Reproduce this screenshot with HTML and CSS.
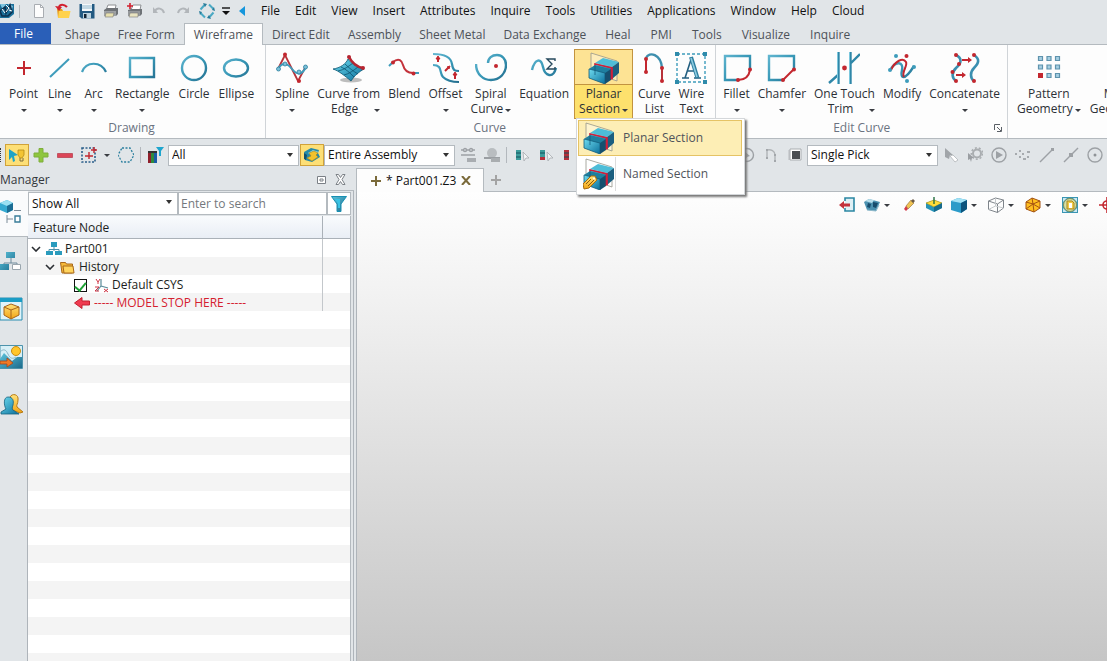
FILE: index.html
```html
<!DOCTYPE html>
<html lang="en">
<head>
<meta charset="utf-8">
<title>Part001.Z3</title>
<link rel="stylesheet" href="styles.css">
</head>
<body>
<svg class="sprite" aria-hidden="true">
  <defs>
    <linearGradient id="teal" x1="0" y1="0" x2="1" y2="1"><stop offset="0" stop-color="#5cc4dc"/><stop offset="1" stop-color="#1d6b8c"/></linearGradient>
    <linearGradient id="cube" x1="0" y1="0" x2="1" y2="1"><stop offset="0" stop-color="#6fdcf0"/><stop offset="1" stop-color="#0a6f9b"/></linearGradient>
    <linearGradient id="gold" x1="0" y1="0" x2="0" y2="1"><stop offset="0" stop-color="#ffe27a"/><stop offset="1" stop-color="#f2a413"/></linearGradient>
    <linearGradient id="stroke" gradientUnits="userSpaceOnUse" x1="0" y1="0" x2="32" y2="32"><stop offset="0" stop-color="#6bbdd6"/><stop offset="0.5" stop-color="#3797b6"/><stop offset="1" stop-color="#1f6485"/></linearGradient>
    <symbol id="section" viewBox="0 0 32 32">
      <path d="M3 1l26 8v20L3 20z" fill="#fff" fill-opacity=".35" stroke="#96958a" stroke-width=".8"/>
      <path d="M7 11l8-5 16 4-7 5z" fill="#4dbdd8"/>
      <path d="M7 11l17 4v10L7 21z" fill="url(#cube)"/>
      <path d="M24 15l7-5v11l-7 6z" fill="#1b5f80"/>
      <path d="M7 17v-5l17 4v11" fill="none" stroke="#d01f3a" stroke-width="1.600"/>
      <path d="M1 17l6-4 16 4-6 5z" fill="#1e7f9f"/>
      <path d="M1 17l16 4v11L1 26z" fill="url(#cube)" stroke="#125c7b" stroke-width=".8"/>
      <path d="M17 21l6-4v11l-6 4z" fill="#15506f"/>
      <path d="M23.500 16v11.500" stroke="#d01f3a" stroke-width="1.600"/>
      <path d="M7 14v9" stroke="#125c7b" stroke-width=".8"/>
    </symbol>
  </defs>
</svg>

<div class="app">
<header class="menubar">
  <div class="quick">
    <svg class="logo" width="14" height="20" viewBox="0 0 14 20"><path d="M0 3h14v10l-5 4H0z" fill="#1b6f9a"/><path d="M0 3h6l-3 6zM8 3l5 2-2 6z" fill="#7ec3df"/><path d="M0 10l5-4 1 6 4-8 2 7-4 4H2z" fill="none" stroke="#0d2f4d" stroke-width="1.600"/><path d="M6 4l3 3-3 4M2 8l3 4M9 9l3 1" stroke="#fff" fill="none"/></svg>
    <span class="rule"></span>
    <button class="tool" aria-label="New"><svg width="16" height="16" viewBox="0 0 16 16"><path d="M3.500 1.500h6l3 3v10h-9z" fill="#fdfdfd" stroke="#a9adb2"/><path d="M9.500 1.500v3h3" fill="none" stroke="#a9adb2"/></svg></button>
    <button class="tool" aria-label="Open"><svg width="16" height="16" viewBox="0 0 16 16"><path d="M2 6h5l1 2h6v7H3z" fill="#e9a01e"/><path d="M4 8h11.500l-1.500 7H3z" fill="#ffd24d"/><path d="M12 4C9 1 5 1 4 4" fill="none" stroke="#d2202f" stroke-width="2.200"/><path d="M0 3l4 5 3-4z" fill="#d2202f"/></svg></button>
    <button class="tool" aria-label="Save"><svg width="16" height="16" viewBox="0 0 16 16"><path d="M.500 1h15v14.500h-13l-2-2z" fill="#235a82"/><path d="M3 1h10v7H3z" fill="#f5f8fa"/><path d="M3 3h10M3 5h10" stroke="#8fb7cc"/><path d="M4 10h8v5.500H4z" fill="#bcd3e0"/><path d="M5 11h2.500v4H5z" fill="#123"/></svg></button>
    <button class="tool" aria-label="Print"><svg width="16" height="16" viewBox="0 0 16 16"><path d="M5 2h8l-1 5H3z" fill="#fff" stroke="#8e9093"/><path d="M1 7l3-2h11v6l-2 2H1z" fill="#6f7377"/><path d="M1 8h12v5H1z" fill="#9ea1a4"/><path d="M3 10h8l-1 4H2z" fill="#e6dfae" stroke="#777" stroke-width=".6"/></svg></button>
    <button class="tool" aria-label="Quick print"><svg width="16" height="16" viewBox="0 0 16 16"><path d="M6 2h8l-1 5H4z" fill="#fff" stroke="#8e9093"/><path d="M1 7l3-1h11v5l-2 2H1z" fill="#6f7377"/><path d="M1 8h12v5H1z" fill="#94979a"/><path d="M3 10h8v4H2z" fill="#e8e3c0" stroke="#777" stroke-width=".6"/><path d="M3 0v6M0 3h6" stroke="#d2202f" stroke-width="1.600"/></svg></button>
    <button class="tool" aria-label="Undo"><svg width="16" height="16" viewBox="0 0 16 16"><path d="M4 8c2-4 8-3 9 2" fill="none" stroke="#b2b6ba" stroke-width="2"/><path d="M2 4v6h5z" fill="#b2b6ba"/></svg></button>
    <button class="tool" aria-label="Redo"><svg width="16" height="16" viewBox="0 0 16 16"><path d="M12 8c-2-4-8-3-9 2" fill="none" stroke="#b2b6ba" stroke-width="2"/><path d="M14 4v6H9z" fill="#b2b6ba"/></svg></button>
    <button class="tool" aria-label="Regenerate"><svg width="16" height="16" viewBox="0 0 16 16"><path d="M1.500 6.500l4-4.500M10 1.500l4.500 4.500M14.500 9.500l-4 4.500M6 14.500L1.500 10" stroke="#4ba9c4" stroke-width="2" fill="none"/><path d="M4 0l4 1-2 3zM15 4l1 4-3-1zM12 16l-4-1 2-3zM1 12L0 8l3 1z" fill="#287b99"/></svg></button>
    <button class="more" aria-label="Customize"><svg width="8" height="8" viewBox="0 0 8 8"><path d="M0 1h8" stroke="#111" stroke-width="1.400"/><path d="M0 4h8L4 8z" fill="#111"/></svg></button>
    <button class="back" aria-label="Collapse"><svg width="6" height="10" viewBox="0 0 6 10"><path d="M6 0v10L0 5z" fill="#1596dc"/></svg></button>
  </div>
  <nav class="menus">
    <a href="#">File</a><a href="#">Edit</a><a href="#">View</a><a href="#">Insert</a><a href="#">Attributes</a><a href="#">Inquire</a><a href="#">Tools</a><a href="#">Utilities</a><a href="#">Applications</a><a href="#">Window</a><a href="#">Help</a><a href="#">Cloud</a>
  </nav>
</header>

<nav class="tabs">
  <a href="#" class="file">File</a><a href="#">Shape</a><a href="#">Free Form</a><a href="#" class="active">Wireframe</a><a href="#">Direct Edit</a><a href="#">Assembly</a><a href="#">Sheet Metal</a><a href="#">Data Exchange</a><a href="#" class="wide">Heal</a><a href="#" class="wide">PMI</a><a href="#" class="wide">Tools</a><a href="#" class="wide">Visualize</a><a href="#" class="wide">Inquire</a>
</nav>

<section class="ribbon">
  <div class="group spaced">
    <div class="commands">
      <button class="cmd"><span class="pic"><svg width="32" height="32" viewBox="0 0 32 32"><path d="M16 9v14M9 16h14" stroke="#c3272f" stroke-width="2"/></svg></span><span>Point</span><i class="caret"></i></button>
      <button class="cmd"><span class="pic"><svg width="32" height="32" viewBox="0 0 32 32"><path d="M6 25L25 7" stroke="#3e9cbb" stroke-width="2"/></svg></span><span>Line</span><i class="caret"></i></button>
      <button class="cmd"><span class="pic"><svg width="32" height="32" viewBox="0 0 32 32"><path d="M4 20C8 9 23 9 28 20" fill="none" stroke="url(#stroke)" stroke-width="2.200"/></svg></span><span>Arc</span><i class="caret"></i></button>
      <button class="cmd"><span class="pic"><svg width="32" height="32" viewBox="0 0 32 32"><path d="M4 6h24v19H4z" fill="none" stroke="url(#stroke)" stroke-width="2.400"/></svg></span><span>Rectangle</span><i class="caret"></i></button>
      <button class="cmd"><span class="pic"><svg width="32" height="32" viewBox="0 0 32 32"><circle cx="16" cy="16" r="12" fill="none" stroke="url(#stroke)" stroke-width="2.400"/></svg></span><span>Circle</span></button>
      <button class="cmd"><span class="pic"><svg width="32" height="32" viewBox="0 0 32 32"><ellipse cx="16" cy="16" rx="12" ry="8.500" fill="none" stroke="url(#stroke)" stroke-width="2.400"/></svg></span><span>Ellipse</span></button>
    </div>
    <h2>Drawing</h2>
  </div>
  <div class="group">
    <div class="commands">
      <button class="cmd"><span class="pic"><svg width="32" height="32" viewBox="0 0 32 32"><path d="M2 17L9 3l13 26 8-15" fill="none" stroke="#b8323a" stroke-width="1.800"/><path d="M2 17C7 9 12 12 16 17s9 8 14-2" fill="none" stroke="#3e9cbb" stroke-width="2"/><g fill="#c3272f"><circle cx="9" cy="2.500" r="2"/><circle cx="23" cy="29" r="2"/></g><g fill="#7cc0d8" stroke="#2a7f9e" stroke-width=".8"><circle cx="2.500" cy="17" r="2"/><circle cx="9" cy="12" r="2"/><circle cx="23" cy="20" r="2"/><circle cx="29.500" cy="15" r="2"/></g></svg></span><span>Spline</span><i class="caret"></i></button>
      <button class="cmd"><span class="pic"><svg width="32" height="32" viewBox="0 0 32 32"><ellipse cx="18" cy="28" rx="11" ry="2.500" fill="#000" opacity=".25"/><path d="M0 17C7 16 13 12 15 7c4 5 10 10 16 10-5 3-9 6-13 12C12 24 6 19 0 17z" fill="url(#cube)" stroke="#0d5873" stroke-width=".8"/><path d="M5 19c6-1 11-5 15-8M11 23c5-1 10-5 14-8M8 15c5 2 9 6 13 10M12 12c4 4 8 7 13 10" fill="none" stroke="#0c5470" stroke-width=".8"/><path d="M16 5c3 6 9 10 14 11" fill="none" stroke="#b62531" stroke-width="2.600"/><circle cx="16" cy="5" r="2" fill="#b62531"/><circle cx="30" cy="16" r="2" fill="#b62531"/></svg></span><span>Curve from</span><span class="last"><span>Edge</span><i class="caret"></i></span></button>
      <button class="cmd"><span class="pic"><svg width="32" height="32" viewBox="0 0 32 32"><path d="M1 14l4-4M25 21h6" stroke="#3e9cbb" stroke-width="2"/><path d="M5 10C11 5 14 9 15 13s3 8 10 8" fill="none" stroke="#c3323b" stroke-width="2"/><circle cx="5" cy="10.500" r="2" fill="#c3272f"/><circle cx="25.500" cy="21.500" r="2" fill="#c3272f"/></svg></span><span>Blend</span></button>
      <button class="cmd"><span class="pic"><svg width="32" height="32" viewBox="0 0 32 32"><g fill="none" stroke="url(#stroke)" stroke-width="2.200"><path d="M3 2c11 0 18 3 19 10s3 7 7 7"/><path d="M3 13c10 0 6 8 10 12 3 3 8 5 16 5"/></g><g fill="#c3272f" stroke="#c3272f"><path d="M8 10V6M25 27v-5M15 19l4-4" stroke-width="2"/><path d="M8 4l2 3H6zM25 20l2 3h-4zM20 14l-1 3-2-2z"/></g></svg></span><span>Offset</span><i class="caret"></i></button>
      <button class="cmd"><span class="pic"><svg width="32" height="32" viewBox="0 0 32 32"><path d="M1 12c0 10 7 16 15 16 9 0 15-7 15-15 0-6-4-10-9-10s-9 3-9 8" fill="none" stroke="url(#stroke)" stroke-width="2.400"/><circle cx="21" cy="14" r="2" fill="#c3272f"/></svg></span><span>Spiral</span><span class="last"><span>Curve</span><i class="caret"></i></span></button>
      <button class="cmd"><span class="pic"><svg width="32" height="32" viewBox="0 0 32 32"><path d="M4 18c3-12 9-12 11-3s10 12 13 1" fill="none" stroke="url(#stroke)" stroke-width="2.400"/><path d="M27 9V7h-8l5 5-5 5h8v-2" fill="none" stroke="#26485c" stroke-width="1.400"/></svg></span><span>Equation</span></button>
      <div class="dropdown">
        <button class="cmd chosen"><span class="pic"><svg width="32" height="32"><use href="#section"/></svg></span><span>Planar</span><span class="last"><span>Section</span><i class="caret"></i></span></button>
        <div class="popup">
          <button class="option current"><svg width="32" height="32"><use href="#section"/></svg><span>Planar Section</span></button>
          <button class="option"><svg width="32" height="32" viewBox="0 0 32 32"><use href="#section" width="32" height="32"/><path d="M0 26l8-8 4 0 2 4-8 8-5 1z" fill="url(#gold)" stroke="#a56a10"/><path d="M3 26l5-5M5 28l6-6" stroke="#8d5a0c"/><circle cx="11" cy="20.500" r="1" fill="#fff"/></svg><span>Named Section</span></button>
        </div>
      </div>
      <button class="cmd"><span class="pic"><svg width="32" height="32" viewBox="0 0 32 32"><path d="M8 7v14" stroke="#c3272f" stroke-width="2"/><path d="M24 16v13" stroke="#b8323a" stroke-width="2"/><path d="M8 6c3-7 15-4 16 10" fill="none" stroke="#3e8fae" stroke-width="2.400"/><g fill="#c3272f"><circle cx="8" cy="7" r="2"/><circle cx="8" cy="20" r="2"/><circle cx="24" cy="16" r="2"/><circle cx="24" cy="29" r="2"/></g></svg></span><span>Curve</span><span>List</span></button>
      <button class="cmd"><span class="pic"><svg width="32" height="32" viewBox="0 0 32 32"><path d="M2 2h28v28H2z" fill="none" stroke="#3e9cbb" stroke-width="1.400" stroke-dasharray="3 2"/><path d="M0 0h4v4H0zM28 0h4v4h-4zM0 28h4v4H0zM28 28h4v4h-4z" fill="#2f8bab"/><path d="M7 26h7M19 26h7M10 26l6.500-20M12 19h8" fill="none" stroke="#235f80" stroke-width="1.600"/><path d="M16 5l6.500 21" stroke="#2c7d9e" stroke-width="4"/><path d="M16 6l6 19" stroke="#8ecbe0" stroke-width="1.600"/></svg></span><span>Wire</span><span>Text</span></button>
    </div>
    <h2>Curve</h2>
  </div>
  <div class="group tight">
    <div class="commands">
      <button class="cmd"><span class="pic"><svg width="32" height="32" viewBox="0 0 32 32"><path d="M18 28H4V4h25v14" fill="none" stroke="url(#stroke)" stroke-width="2.400"/><path d="M17 28c7 0 11-4 12-10" fill="none" stroke="#c3272f" stroke-width="2"/><circle cx="17" cy="28" r="2" fill="#c3272f"/><circle cx="29" cy="17.500" r="2" fill="#c3272f"/></svg></span><span>Fillet</span><i class="caret"></i></button>
      <button class="cmd"><span class="pic"><svg width="32" height="32" viewBox="0 0 32 32"><path d="M17 28H3V4h25v13" fill="none" stroke="url(#stroke)" stroke-width="2.400"/><path d="M17 28l11-11" stroke="#c3272f" stroke-width="2"/><circle cx="17" cy="28" r="2" fill="#c3272f"/><circle cx="28" cy="17.500" r="2" fill="#c3272f"/></svg></span><span>Chamfer</span><i class="caret"></i></button>
      <button class="cmd"><span class="pic"><svg width="32" height="32" viewBox="0 0 32 32"><g stroke="#2f87a8" stroke-width="2.400"><path d="M10.500 0v32M22.500 0v32M1 31l9-8M23 11l9-9"/></g><path d="M9.500 0v32M21.500 0v32" stroke="#7cc7dd" stroke-width="1"/><circle cx="16.500" cy="16" r="2.400" fill="#c3272f"/></svg></span><span>One Touch</span><span class="last"><span>Trim</span><i class="caret"></i></span></button>
      <button class="cmd"><span class="pic"><svg width="32" height="32" viewBox="0 0 32 32"><path d="M4 18c6-10 14-8 12 0s2 12 12-4" fill="none" stroke="url(#stroke)" stroke-width="2.400"/><path d="M5 18c4-9 12-13 15-8 2 4-5 10-2 15" fill="none" stroke="#c3272f" stroke-width="2"/><circle cx="20.500" cy="4" r="2" fill="#c3272f"/><g fill="#3e9cbb"><circle cx="10" cy="4" r="2"/><circle cx="4" cy="18" r="2"/><circle cx="28" cy="15" r="2"/><circle cx="21" cy="29" r="2"/></g></svg></span><span>Modify</span></button>
      <button class="cmd"><span class="pic"><svg width="32" height="32" viewBox="0 0 32 32"><g fill="none" stroke="#3a8fb0" stroke-width="2.600"><path d="M7 3c6 3 6 8 0 13-5 5-4 10 0 13"/><path d="M25 3c6 4 5 8 0 13-4 4-4 10 0 13"/></g><path d="M13 8h8M7 23h8" stroke="#c3272f" stroke-width="1.800"/><path d="M19 5l4 3-4 3zM13 20l4 3-4 3z" fill="#c3272f"/><g fill="#c3272f"><circle cx="7" cy="3" r="2"/><circle cx="10" cy="12" r="2"/><circle cx="3.500" cy="20" r="2"/><circle cx="7" cy="29" r="2"/><circle cx="25" cy="3" r="2"/><circle cx="25" cy="29" r="2"/></g></svg></span><span>Concatenate</span><i class="caret"></i></button>
    </div>
    <h2>Edit Curve</h2>
    <button class="launcher" aria-label="Edit Curve options"><svg width="8" height="8" viewBox="0 0 8 8"><path d="M.500 6V.500H6M3 3l4 4M7.500 3v4.500H3" fill="none" stroke="#5b6067"/></svg></button>
  </div>
  <div class="group spaced">
    <div class="commands">
      <button class="cmd"><span class="pic"><svg width="32" height="32" viewBox="0 0 32 32"><g fill="#a5cfe2" stroke="#5f93ad" stroke-width="1.200"><path d="M5.500 4.500h4v4h-4zM14 4.500h4v4h-4zM22.500 4.500h4v4h-4zM5.500 13h4v4h-4zM14 13h4v4h-4zM22.500 13h4v4h-4zM14 21.500h4v4h-4zM22.500 21.500h4v4h-4z"/></g><path d="M5 21h5v5H5z" fill="#c3272f"/></svg></span><span>Pattern</span><span class="last"><span>Geometry</span><i class="caret"></i></span></button>
      <button class="cmd"><span class="pic"></span><span>Mirror</span><span class="last"><span>Geometry</span><i class="caret"></i></span></button>
    </div>
  </div>
</section>

<div class="toolbar">
  <span class="grip"></span>
  <button class="tool on" aria-label="Pick filter"><svg width="16" height="16" viewBox="0 0 16 16"><path d="M0 2l9 6-4 1 1 5-2 1-1-5-3 3z" fill="#1fa3c7"/><path d="M9 3h6v5l-2 3h-2L9 8z" fill="#f3c432" stroke="#b48b16" stroke-width=".8"/><path d="M11 11v3h3v-3" fill="none" stroke="#7b6b3a"/></svg></button>
  <button class="tool" aria-label="Add"><svg width="16" height="16" viewBox="0 0 16 16"><path d="M6 1.500h4V6h5v4h-5v5H6v-5H1V6h5z" fill="#8ec63f" stroke="#7fae3c"/></svg></button>
  <button class="tool" aria-label="Remove"><svg width="16" height="16" viewBox="0 0 16 16"><path d="M.500 6.500h15v4H.500z" fill="#dc4658" stroke="#c05562"/></svg></button>
  <button class="tool" aria-label="Pick mode"><svg width="16" height="16" viewBox="0 0 16 16"><path d="M1 1h13v14H1z" fill="none" stroke="#2b5f8a" stroke-width="1.600" stroke-dasharray="2 1.500"/><path d="M8 5v7M4 9h8M13 0v6M10 3h6" stroke="#c3272f" stroke-width="1.400"/></svg></button>
  <button class="arrow" aria-label="Pick mode menu"><i class="caret"></i></button>
  <button class="tool" aria-label="Polygon pick"><svg width="16" height="16" viewBox="0 0 16 16"><path d="M4 1h8l4 7-4 7H4L0 8z" fill="none" stroke="#2b7f9e" stroke-width="1.300" stroke-dasharray="2 1.500"/></svg></button>
  <span class="rule"></span>
  <button class="tool" aria-label="Filter color"><svg width="16" height="16" viewBox="0 0 16 16"><path d="M0 5h3v11H0z" fill="#8f1f2b"/><path d="M3 5h3v11H3z" fill="#2e8b3d"/><path d="M6 5h3v11H6z" fill="#1a5ba5"/><path d="M0 4h9v2H0z" fill="#333"/><path d="M8 0h8l-3 4v5h-2V4z" fill="#1ea5ce"/></svg></button>
  <label class="combo"><select aria-label="Filter list"><option>All</option></select></label>
  <button class="tool on" aria-label="Assembly scope"><svg width="18" height="18" viewBox="0 0 18 18"><path d="M1 6l7-4 8 2-1 3 2 4-8 5-7-2z" fill="#258aa8"/><path d="M5 7l5-3 6 2-6 4z" fill="#8fdcec"/><path d="M6 7l5-2 4 2-2 2 2 2-6 4-5-3 4-2z" fill="#f3c22c" stroke="#a98418" stroke-width=".6"/><path d="M1 7l3 2-1 5-2-1z" fill="#11516f"/></svg></button>
  <label class="combo"><select aria-label="Scope"><option>Entire Assembly</option></select></label>
  <button class="tool" aria-label="Link"><svg width="16" height="16" viewBox="0 0 16 16"><g stroke="#9da1a5" fill="none" stroke-width="1.400"><path d="M1 8h14M1 3h3M12 3h3M7 3h2"/><circle cx="5" cy="3" r="1.500"/><circle cx="11" cy="3" r="1.500"/></g><path d="M7 11h9v4H7z" fill="#a9adb1"/></svg></button>
  <button class="tool" aria-label="Globe"><svg width="16" height="16" viewBox="0 0 16 16"><circle cx="8" cy="6" r="5" fill="#b9bdc0"/><path d="M0 11h16" stroke="#9a9ea2" stroke-width="2"/><path d="M7 11h9v4H7z" fill="#a9adb0"/></svg></button>
  <span class="rule"></span>
  <button class="tool" aria-label="Pick all"><svg width="16" height="16" viewBox="0 0 16 16"><path d="M2 3h5v10H2z" fill="#3c9c9b"/><path d="M2 6h5M2 10h5" stroke="#14515d"/><path d="M9 5l6 6-3 0-2 3z" fill="#f2f4f5" stroke="#a6abaf" stroke-width=".8"/></svg></button>
  <button class="tool" aria-label="Pick last"><svg width="16" height="16" viewBox="0 0 16 16"><path d="M2 3h5v7H2z" fill="#3c9c9b"/><path d="M2 10h5v3H2z" fill="#b5303b"/><path d="M2 6h5" stroke="#14515d"/><path d="M9 5l6 6-3 0-2 3z" fill="#f2f4f5" stroke="#a6abaf" stroke-width=".8"/></svg></button>
  <button class="tool" aria-label="Unpick all"><svg width="16" height="16" viewBox="0 0 16 16"><path d="M2 3h5v10H2z" fill="#b5303b"/><path d="M2 6h5M2 10h5" stroke="#14515d"/></svg></button>
  <span class="covered"></span>
  <button class="tool" aria-label="Pick point"><svg width="16" height="16" viewBox="0 0 16 16"><circle cx="8" cy="8" r="6.500" fill="none" stroke="#9da1a5" stroke-width="1.400"/><path d="M5 4l6 5-3 1-2 3z" fill="#9da1a5"/></svg></button>
  <button class="tool" aria-label="Pick curve"><svg width="16" height="16" viewBox="0 0 16 16"><path d="M4 12V3c4-1 8 1 8 5v6" fill="none" stroke="#b0b4b7" stroke-width="1.400"/><path d="M3 2h2v2H3zM3 10h2v2H3zM11 7h2v2h-2zM11 13h2v2h-2z" fill="#a3a7ab"/></svg></button>
  <button class="tool" aria-label="Pick face"><svg width="16" height="16" viewBox="0 0 16 16"><path d="M1 3h11v10H1z" fill="#cdd0d3"/><path d="M3 2h11v11H3z" fill="#fff" stroke="#a9adb0"/><path d="M5 4h8v8H5z" fill="#4b4e52"/></svg></button>
  <label class="combo"><select aria-label="Pick type"><option>Single Pick</option></select></label>
  <button class="tool" aria-label="Cursor"><svg width="16" height="16" viewBox="0 0 16 16"><path d="M2 1l8 7-3 0-1 4-4-2z" fill="#a1a5a9"/><path d="M7 9l3-1 5 5-3 2z" fill="#fff" stroke="#b0b4b7" stroke-width=".8"/></svg></button>
  <button class="tool" aria-label="Pick settings"><svg width="16" height="16" viewBox="0 0 16 16"><circle cx="10" cy="6.500" r="4" fill="none" stroke="#a9adb0" stroke-width="2"/><circle cx="10" cy="6.500" r="5.700" fill="none" stroke="#a9adb0" stroke-width="1.500" stroke-dasharray="2 2"/><path d="M1 6l6 5-2 0-1 4-1-3-2 1z" fill="#9a9ea2"/></svg></button>
  <button class="tool" aria-label="Play"><svg width="16" height="16" viewBox="0 0 16 16"><circle cx="8" cy="8" r="7" fill="none" stroke="#9da1a5" stroke-width="1.400"/><path d="M5 4l7 4-7 4z" fill="#9da1a5"/></svg></button>
  <button class="tool" aria-label="Points"><svg width="16" height="16" viewBox="0 0 16 16"><path d="M0 6h2v2H0zM4 3h2v2H4zM7 6h2v2H7zM4 9h2v2H4zM8 11h3v2H8zM12 9h2v2h-2zM12 4h3v2h-3z" fill="#a6aaae"/></svg></button>
  <button class="tool" aria-label="End point"><svg width="16" height="16" viewBox="0 0 16 16"><path d="M1 15L14 2" stroke="#9da1a5" stroke-width="1.400"/><path d="M12 1h3v3h-3z" fill="#9da1a5"/></svg></button>
  <button class="tool" aria-label="Midpoint"><svg width="16" height="16" viewBox="0 0 16 16"><path d="M1 15L15 1" stroke="#9da1a5" stroke-width="1.400"/><path d="M6 6h4v4H6z" fill="#9da1a5"/></svg></button>
  <button class="tool" aria-label="Center"><svg width="16" height="16" viewBox="0 0 16 16"><circle cx="8" cy="8" r="7" fill="none" stroke="#9da1a5" stroke-width="1.400"/><circle cx="8" cy="8" r="1.500" fill="#8f9397"/></svg></button>
</div>

<main class="work">
  <aside class="manager">
    <div class="title"><h1>Manager</h1>
      <button aria-label="Float"><svg width="9" height="8" viewBox="0 0 9 8"><path d="M.500.500h8v7h-8z" fill="#fff" stroke="#7b8086"/><path d="M3 3h3v2H3z" fill="none" stroke="#7b8086"/></svg></button>
      <button aria-label="Close"><svg width="11" height="11" viewBox="0 0 11 11"><path d="M1 .500h2.500l2 3 2-3H10L7 5.500l3 5H7.500l-2-3-2 3H1l3-5z" fill="#fff" stroke="#7b8086"/></svg></button>
    </div>
    <div class="body">
      <div class="pages">
        <button class="open" aria-label="History"><svg width="22" height="26" viewBox="0 0 22 26"><path d="M0 4l7-3 6 3v7l-6 3-7-3z" fill="#35a9d0"/><path d="M0 4l7-3 6 3-6 3z" fill="#9be0f2"/><path d="M7 7l6-3v7l-6 3z" fill="#1c6d94"/><path d="M7 16v8M7 20h6M14 11.500h7" stroke="#7c8c98" fill="none"/><path d="M15 17h5v6h-5z" fill="#fff" stroke="#3a7d99" stroke-width="1.400"/></svg></button>
        <button aria-label="Assembly"><svg width="22" height="20" viewBox="0 0 22 20"><path d="M11 6v6M4 14v-2h13v2" fill="none" stroke="#6f8b9c"/><path d="M6 1h9v6H6zM0 13h9v6H0z" fill="url(#teal)"/><path d="M12.500 13.500h8v5h-8z" fill="#fff" stroke="#9aa6ae"/></svg></button>
        <button aria-label="View"><svg width="24" height="24" viewBox="0 0 24 24"><path d="M0 1h22v22H0z" fill="#dff4fa" stroke="#2b8db0"/><path d="M0 1h22v4H0z" fill="#1a9cc5"/><path d="M4 10l7-3 8 3v8l-8 4-7-4z" fill="url(#gold)" stroke="#a8641a"/><path d="M4 10l7 3 8-3M11 13v9" fill="none" stroke="#a8641a"/></svg></button>
        <button aria-label="Visual"><svg width="23" height="24" viewBox="0 0 23 24"><path d="M0 .500h22.500v23H0z" fill="#d8f0f7" stroke="#4d93ac"/><path d="M0 14l4-6 8 8 5-4 5 0v11H0z" fill="url(#teal)"/><path d="M0 7c4-4 6-2 8 2 2 5 5 5 8 3" stroke="#8cb6c6" fill="none"/><circle cx="16" cy="6" r="4.500" fill="#ffc62a" stroke="#c98b12"/><path d="M0 16h7v-3l6 5-6 4v-3H0z" fill="#ef7b26" stroke="#a8481a" stroke-width=".8"/></svg></button>
        <button aria-label="Role"><svg width="24" height="22" viewBox="0 0 24 22"><path d="M10 3c2-4 9-3 8 3 0 4-2 5-1 7l6 5-3 1-8-3z" fill="url(#gold)" stroke="#b67a14"/><path d="M8 3c5 0 6 4 5 8-1 3-1 4 0 5l6 4H1v-2l5-3c-2-3-3-12 2-12z" fill="url(#cube)" stroke="#15627f" stroke-width=".8"/></svg></button>
      </div>
      <div class="panel">
        <div class="search">
          <label class="combo"><select aria-label="Show"><option>Show All</option></select></label>
          <input type="text" aria-label="Search" placeholder="Enter to search">
          <button aria-label="Filter"><svg width="16" height="16" viewBox="0 0 16 16"><path d="M.500.500h15L10 8v7.500H6V8z" fill="url(#teal)" stroke="#1790b3"/><path d="M4 3h5v9H7V8z" fill="#38c3e4"/></svg></button>
        </div>
        <div class="tree">
          <table>
            <thead><tr><th>Feature Node</th><th class="flag"></th></tr></thead>
            <tbody>
              <tr><td><div class="node"><svg width="10" height="6" viewBox="0 0 10 6"><path d="M1 1l4 4 4-4" fill="none" stroke="#2b2e33" stroke-width="1.600"/></svg><svg class="kind" width="16" height="14" viewBox="0 0 16 14"><path d="M8 5v4M3 10V7.500h10V10" fill="none" stroke="#4c8fa8"/><path d="M5 0h6v5H5zM0 9h7v4H0zM9 9h7v4H9z" fill="#2a9bbd"/></svg>Part001</div></td><td></td></tr>
              <tr><td><div class="node deep"><svg width="10" height="6" viewBox="0 0 10 6"><path d="M1 1l4 4 4-4" fill="none" stroke="#2b2e33" stroke-width="1.600"/></svg><svg class="kind" width="16" height="13" viewBox="0 0 16 13"><path d="M2 12L.500 1.500h5l1 1.500h6V12z" fill="#f6b93a" stroke="#a8681a"/><path d="M4 12L3 5h10l1 7z" fill="#ffd45e" stroke="#a8681a"/></svg>History</div></td><td></td></tr>
              <tr><td><label class="node leaf"><input type="checkbox" checked><svg class="kind" width="16" height="16" viewBox="0 0 16 16"><path d="M7 9V2M7 9l7 2M7 9l-4 5" stroke="#5b8c99" fill="none" stroke-width="1.200"/><path d="M2 2l2 3 2-3M4 5v2M10 12l4 3M14 12l-4 3M1 10h4l-4 4h4" stroke="#cf3545" fill="none"/></svg>Default CSYS</label></td><td></td></tr>
              <tr><td><div class="node stop"><svg width="16" height="12" viewBox="0 0 16 12"><path d="M.500 6L8 .500v3.500h7.500v4H8v3.500z" fill="#ef3b50" stroke="#c3202f"/></svg>----- MODEL STOP HERE -----</div></td><td></td></tr>
            </tbody>
          </table>
        </div>
      </div>
    </div>
  </aside>
  <section class="document">
    <div class="files">
      <div class="doc"><svg width="10" height="10" viewBox="0 0 10 10"><path d="M5 0v10M0 5h10" stroke="#7a6a3a" stroke-width="2"/></svg><span>* Part001.Z3</span><button aria-label="Close file"><svg width="10" height="9" viewBox="0 0 10 9"><path d="M1 0l8 9M9 0L1 9" stroke="#7a6a3a" stroke-width="2"/></svg></button></div>
      <button class="add" aria-label="New file"><svg width="10" height="10" viewBox="0 0 10 10"><path d="M5 0v10M0 5h10" stroke="#a3a3a3" stroke-width="2"/></svg></button>
    </div>
    <div class="canvas">
      <div class="viewbar">
        <button aria-label="Exit"><svg width="16" height="16" viewBox="0 0 16 16"><path d="M6 4V1h9v13H6v-3" fill="#dff0f5" stroke="#2b87a3" stroke-width="1.600"/><path d="M0 8l5-4v2.500h6v3H5V12z" fill="#c3323b"/></svg></button>
        <button aria-label="Render"><svg width="16" height="16" viewBox="0 0 16 16"><path d="M0 5l5-3 11 3-4 9-9-1z" fill="#4b91b0"/><path d="M1 4l4-2 5 1-2 3z" fill="#b9dfec"/><path d="M4 6l3 1-1 4-3-1zM9 5l5 1-2 5-3-1z" fill="#174c6c"/><path d="M3 13l9 1 3-6" stroke="#8eb9ca" fill="none"/></svg><i class="caret"></i></button>
        <button aria-label="Erase"><svg width="16" height="16" viewBox="0 0 16 16"><path d="M5 9l5-6 3 3-6 6z" fill="#f0c453" stroke="#8a6a38" stroke-width=".6"/><path d="M5 9l2 3-2 2-2-2z" fill="#d13b48"/><path d="M10 4l2-2 2 2-2 2z" fill="#6b5a46"/></svg></button>
        <button aria-label="Align plane"><svg width="16" height="16" viewBox="0 0 16 16"><path d="M0 6l8-3 8 3v5l-8 4-8-4z" fill="#2794b8"/><path d="M0 6l8-3 8 3-8 4z" fill="#ffdc3a" stroke="#b29312" stroke-width=".6"/><path d="M8 10l8-4v5l-8 4z" fill="#176b8d"/><path d="M8 0v7" stroke="#236d41" stroke-width="1.400"/></svg></button>
        <button aria-label="Shaded"><svg width="16" height="16" viewBox="0 0 16 16"><path d="M0 4l7-3 9 2v9l-6 4-10-3z" fill="#2b9bc9"/><path d="M0 4l7-3 9 2-6 3z" fill="#a2e2f5"/><path d="M10 6l6-3v9l-6 4z" fill="#0c547d"/></svg><i class="caret"></i></button>
        <button aria-label="Wireframe"><svg width="16" height="16" viewBox="0 0 16 16"><path d="M.500 4l7-3 8 2v8l-6 4.500-9-3zM.500 4l9 3 6-4M9.500 7v8.500" fill="#fdfdfd" stroke="#7f858b"/><path d="M7.500 1v8l-7 3.500M7.500 9l8 2" fill="none" stroke="#c5c9cc"/></svg><i class="caret"></i></button>
        <button aria-label="Analysis"><svg width="16" height="16" viewBox="0 0 16 16"><path d="M1 5l6-4 8 3v7l-6 4-8-3z" fill="#ffbf1f" stroke="#a35213"/><path d="M7 1l1 6 7-3M8 7l1 8M1 5l7 2-7 5M8 7l7 4" fill="none" stroke="#a35213"/></svg><i class="caret"></i></button>
        <button aria-label="Section view"><svg width="16" height="16" viewBox="0 0 16 16"><path d="M0 0h16v16H0z" fill="#3a96b3"/><path d="M1 1h4L1 5zM15 1v4l-4-4zM1 15v-4l4 4zM15 15h-4l4-4z" fill="#cbe8f1"/><circle cx="8" cy="8" r="6.500" fill="#d6dfa5" stroke="#80905a"/><path d="M5 4h5l2 2v6H5z" fill="#f1cb45" stroke="#a98725"/><path d="M7 6h3v5H7z" fill="#fff"/></svg><i class="caret"></i></button>
        <button aria-label="Target"><svg width="16" height="16" viewBox="0 0 16 16"><circle cx="8" cy="8" r="4" fill="none" stroke="#c3272f" stroke-width="1.600"/><path d="M8 0v16M0 8h16" stroke="#c3272f" stroke-width="1.600"/></svg></button>
      </div>
    </div>
  </section>
</main>
</div>
</body>
</html>
```

FILE: styles.css
```css
* { box-sizing: border-box; }

html, body { height: 100%; margin: 0; }

body {
  overflow: hidden;
  background: #e1e5e8;
  color: #1b1d20;
  font: 12px/16px "Open Sans", "Noto Sans", sans-serif;
}

button {
  margin: 0;
  padding: 0;
  border: 0;
  background: none;
  color: inherit;
  font: inherit;
}

a { color: inherit; text-decoration: none; }
h1, h2 { margin: 0; font: inherit; }
svg { display: block; flex: none; }
.sprite { position: absolute; width: 0; height: 0; }

.app { display: flex; flex-direction: column; height: 100%; overflow: hidden; }

.caret {
  display: block;
  width: 0;
  height: 0;
  border: 3px solid transparent;
  border-top-color: #3a3d42;
  border-bottom: 0;
}

.rule { flex: none; width: 1px; height: 16px; background: #b3b8bd; }

.tool {
  display: flex;
  flex: none;
  align-items: center;
  justify-content: center;
  width: 24px;
  height: 22px;
}

/* Menu bar */
.menubar { display: flex; flex: none; align-items: center; height: 22px; }
.quick { display: flex; flex: none; align-items: center; }
.quick .rule { height: 13px; margin: 0 7px 0 5px; }
.more { width: 15px; padding-left: 3px; }
.back { width: 16px; padding-left: 5px; }
.menus { display: flex; gap: 15px; padding-left: 11px; color: #111; white-space: nowrap; }

/* Ribbon tabs */
.tabs {
  display: flex;
  flex: none;
  height: 23px;
  padding-top: 1px;
  border-bottom: 1px solid #b4babf;
  color: #4d5259;
  white-space: nowrap;
}
.tabs a { padding: 4px 9px 0; }
.tabs .wide { padding-right: 10px; padding-left: 10px; }
.tabs .file { width: 51px; margin-right: 5px; padding: 3px 0 0 14px; background: #2a5fb8; color: #fff; }
.tabs .active {
  height: 22px;
  margin-bottom: -1px;
  border: 1px solid #b4babf;
  border-bottom: 0;
  background: #fdfdfd;
  padding-top: 3px;
}

/* Ribbon */
.ribbon {
  display: flex;
  flex: none;
  height: 94px;
  border-bottom: 1px solid #b4babf;
  background: #fdfdfd;
  color: #2c3036;
}
.group {
  display: grid;
  position: relative;
  flex: none;
  grid-template-rows: 1fr 18px;
  padding: 4px 7px 0 5px;
  border-right: 1px solid #d0d4d8;
}
.tight { padding-right: 3px; padding-left: 3px; }
.group:last-child { border-right: 0; }
.group h2 { color: #6a7280; text-align: center; }
.commands { display: flex; align-items: flex-start; }
.spaced .commands { gap: 1px; }
.cmd {
  display: flex;
  flex: none;
  flex-direction: column;
  align-items: center;
  min-width: 33px;
  height: 70px;
  padding: 0 4px;
  line-height: 15px;
  white-space: nowrap;
}
.pic { display: grid; flex: none; place-items: center; height: 37px; margin: 0 -4px; }
.cmd > .caret { margin-top: 8px; }
.last { display: grid; grid-template-columns: 1fr auto; gap: 2px; align-items: center; align-self: stretch; }
.last .caret { margin-top: 4px; }
.dropdown { position: relative; flex: none; margin: 0 1px; }
.chosen {
  border: 1px solid #c2933f;
  background: linear-gradient(#fde394 34px, #c2933f 34px, #c2933f 35px, #fde16d 35px);
}
.chosen .pic { height: 36px; }
.launcher { position: absolute; right: 5px; bottom: 6px; }

.popup {
  position: absolute;
  z-index: 2;
  top: 69px;
  left: 2px;
  width: 169px;
  padding: 1px 2px 2px 1px;
  border: 1px solid #d4d7da;
  background: #fff;
  box-shadow: 2px 2px 2px #777;
  color: #50545b;
}
.option {
  display: flex;
  align-items: center;
  width: 100%;
  height: 36px;
  padding-left: 4px;
  border: 1px solid transparent;
}
.option span { padding-left: 8px; }
.option:not(.current) span { padding: 9px 0 9px 7px; border-left: 1px solid #dcdcdc; }
.current { border-color: #e5c365; background: #fdeeb5; }

/* Selection toolbar */
.toolbar { display: flex; flex: none; align-items: center; height: 30px; padding-top: 2px; }
.grip { flex: none; width: 1px; height: 14px; margin-right: 4px; border-left: 1px dotted #333; }
.toolbar .rule { margin: 0 3px 0 2px; }
.toolbar .on { border: 1px solid #d0a23a; background: #fddf76; }
.arrow { flex: none; width: 13px; padding-left: 3px; }
.covered { flex: none; width: 153px; }

.combo { display: block; position: relative; flex: none; width: 131px; height: 21px; }
.combo::after {
  position: absolute;
  top: 8px;
  right: 6px;
  border: 3px solid transparent;
  border-top: 4px solid #333;
  border-bottom: 0;
  content: "";
  pointer-events: none;
}
.toolbar .combo + .tool { margin-left: 1px; }
select, input[type="text"] {
  width: 100%;
  height: 100%;
  margin: 0;
  padding: 0 3px;
  border: 1px solid #b4babf;
  border-radius: 0;
  outline: 0;
  background: #fff;
  color: #111;
  font: inherit;
  appearance: none;
}

/* Manager */
.work { display: grid; flex: 1; grid-template-columns: 356px minmax(0, 1fr); min-height: 0; }
.manager { display: flex; flex-direction: column; padding-right: 2px; min-height: 0; }
.title { display: flex; flex: none; align-items: center; gap: 9px; height: 21px; padding-right: 8px; }
.title h1 { flex: 1; color: #33373c; }
.body { display: flex; flex: 1; min-height: 0; border-top: 1px solid #b4babf; }
.pages { display: flex; flex: none; flex-direction: column; width: 28px; border-right: 1px solid #aeb4ba; }
.pages button { display: flex; align-items: center; height: 48px; }
.pages .open { height: 46px; margin-right: -1px; padding-bottom: 4px; border-bottom: 1px solid #b4babf; background: #fafbfc; }
.panel { display: flex; flex: 1; flex-direction: column; min-width: 0; border-right: 1px solid #aeb4ba; padding-right: 2px; }
.search {
  display: grid;
  flex: none;
  grid-template-columns: 150px 149px 1fr;
  height: 25px;
  padding: 1px 0;
}
.search .combo { width: auto; height: 23px; }
.search input[type="text"] { padding-left: 2px; }
.search input::placeholder { color: #74787d; opacity: 1; }
.search button { display: grid; place-items: center; border: 1px solid #b4babf; background: #fff; }
.tree {
  flex: 1;
  border-right: 1px solid #b4babf;
  background: #fff repeating-linear-gradient(#fff 0 18px, #f4f4f4 18px 36px) 0 23px;
}
table { width: 100%; border-collapse: separate; border-spacing: 0; table-layout: fixed; }
th, td { padding: 0; border-right: 1px solid #c3c7cb; font-weight: 400; text-align: left; }
th {
  height: 23px;
  padding: 2px 0 0 5px;
  border-bottom: 1px solid #aab1b8;
  border-right-color: #aab1b8;
  background: linear-gradient(#f9fbfd, #e9eef5);
}
.flag { width: 27px; border-right: 0; }
td:last-child { border-right: 0; }
.node { display: flex; align-items: center; height: 18px; padding: 2px 0 0 3px; white-space: nowrap; }
.kind { margin: 0 3px 0 5px; }
.deep { padding-left: 17px; }
.leaf { padding-left: 46px; }
.stop { gap: 4px; padding-left: 46px; color: #d5202f; }
input[type="checkbox"] {
  display: grid;
  flex: none;
  place-items: center;
  width: 13px;
  height: 13px;
  margin: 0;
  border: 1px solid #111;
  background: #fff;
  appearance: none;
}
input[type="checkbox"]:checked::after {
  width: 5px;
  height: 9px;
  margin-bottom: 2px;
  border: solid #1fa336;
  border-width: 0 2px 2px 0;
  content: "";
  rotate: 40deg;
}
.leaf .kind { margin-left: 7px; margin-right: 2px; }

/* Document area */
.document { display: flex; flex-direction: column; min-width: 0; }
.files { display: flex; flex: none; align-items: stretch; height: 22px; }
.doc {
  display: flex;
  z-index: 1;
  align-items: center;
  gap: 5px;
  margin: -1px 0 -1px;
  padding: 0 12px 0 14px;
  border: 1px solid #b4babf;
  border-bottom: 0;
  background: #fdfdfd;
  color: #111;
}
.add { padding: 0 7px; }
.canvas {
  flex: 1;
  overflow: hidden;
  border-top: 1px solid #b4babf;
  border-left: 1px solid #aeb4ba;
  background: linear-gradient(#fefefe, #c6c6c6);
}
.viewbar { display: flex; justify-content: flex-end; margin: 2px -13px 0 0; }
.viewbar button { display: flex; flex: none; align-items: center; height: 22px; padding: 0 5px 0 4px; }
.viewbar .caret { margin-left: 4px; margin-right: 2px; }
```
